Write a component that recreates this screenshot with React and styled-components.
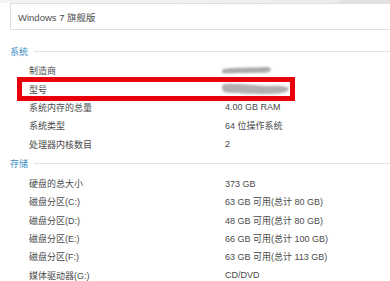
import React from 'react'
import styled, { createGlobalStyle } from 'styled-components'

const GlobalStyle = createGlobalStyle`
    html, body {
        margin: 0;
        padding: 0;
        background: #ffffff;
        overflow: hidden;
    }
    body {
        font-family: "Liberation Sans", "Noto Sans CJK SC", sans-serif;
        font-size: 9px;
        color: #4a4a4a;
    }
`

const system = [
    { label: '制造商', blur: 'short' },
    { label: '型号', blur: 'long', marked: true },
    { label: '系统内存的总量', value: '4.00 GB RAM' },
    { label: '系统类型', value: '64 位操作系统' },
    { label: '处理器内核数目', value: '2' },
]

const storage = [
    { label: '硬盘的总大小', value: '373 GB' },
    { label: '磁盘分区(C:)', value: '63 GB 可用(总计 80 GB)' },
    { label: '磁盘分区(D:)', value: '48 GB 可用(总计 80 GB)' },
    { label: '磁盘分区(E:)', value: '66 GB 可用(总计 100 GB)' },
    { label: '磁盘分区(F:)', value: '63 GB 可用(总计 113 GB)' },
    { label: '媒体驱动器(G:)', value: 'CD/DVD' },
]

const Smudge = ({ kind }) => (
    <svg width="80" height="16" viewBox="0 0 80 16">
        <defs>
            <filter id={`soft-${kind}`} x="-20%" y="-50%" width="140%" height="200%">
                <feGaussianBlur stdDeviation="1" />
            </filter>
        </defs>
        {kind === 'short' ? (
            <path
                d="M3 6 C12 4, 30 5, 46 4 C51 4, 51 9, 46 9.5 C30 10, 12 10, 4 10.5 C0 10.5, 0 6.5, 3 6 Z"
                fill="#a9a9a9"
                filter={`url(#soft-${kind})`}
            />
        ) : (
            <path
                d="M3 3 C15 2, 30 3.5, 45 5 C55 4.5, 63 4.5, 67 6.5 C70 10, 63 13, 50 13 C35 13.5, 15 12.5, 5 11.5 C0 10.5, 0 4, 3 3 Z"
                fill="#b0b0b0"
                filter={`url(#soft-${kind})`}
            />
        )}
    </svg>
)

const Section = ({ title, rows, first }) => (
    <Group first={first}>
        <Heading first={first}>
            <HeadingText>{title}</HeadingText>
            <HeadingRule />
        </Heading>
        {rows.map(row => (
            <Row key={row.label} marked={row.marked}>
                <Label>{row.label}</Label>
                <Value>{row.blur ? <Smudge kind={row.blur} /> : row.value}</Value>
            </Row>
        ))}
    </Group>
)

export default () => (
    <Page>
        <GlobalStyle />
        <TopEdge />
        <EditionBox>Windows 7 旗舰版</EditionBox>
        <Section title="系统" rows={system} first />
        <Section title="存储" rows={storage} />
    </Page>
)

const Page = styled.div`
    width: 390px;
    height: 281px;
    overflow: hidden;
`

const TopEdge = styled.div`
    height: 3px;
    background: linear-gradient(to right, #f3f3f3 0%, #ededed 85%, #e2e2e2 88%, #e2e2e2 100%);
`

const EditionBox = styled.div`
    display: flex;
    align-items: center;
    height: 25px;
    margin-left: 10px;
    margin-right: -4px;
    padding-left: 7px;
    border: 1px solid #dedede;
    font-size: 9.5px;
    color: #505050;
`

const Group = styled.div`
    margin-top: ${p => (p.first ? '12.8px' : '1.2px')};
`

const Heading = styled.div`
    display: flex;
    align-items: center;
    gap: 6px;
    height: 18.3px;
    padding-left: 10px;
    margin-bottom: ${p => (p.first ? '0.6px' : '1.8px')};
`

const HeadingText = styled.span`
    color: #3d8fc6;
`

const HeadingRule = styled.div`
    flex: 1;
    height: 1px;
    background: #e2e2e2;
`

const Row = styled.div`
    position: relative;
    display: grid;
    grid-template-columns: 196px 1fr;
    align-items: center;
    height: 18.3px;
    padding-left: 29px;

    &::after {
        content: '';
        display: ${p => (p.marked ? 'block' : 'none')};
        position: absolute;
        left: 17px;
        top: -3px;
        width: 268px;
        height: 14.5px;
        border: 5px solid #e8000b;
        pointer-events: none;
    }
`

const Label = styled.span`
    white-space: nowrap;
`

const Value = styled.span`
    display: flex;
    align-items: center;
    white-space: nowrap;

    svg {
        display: block;
        margin-left: -4px;
    }
`
